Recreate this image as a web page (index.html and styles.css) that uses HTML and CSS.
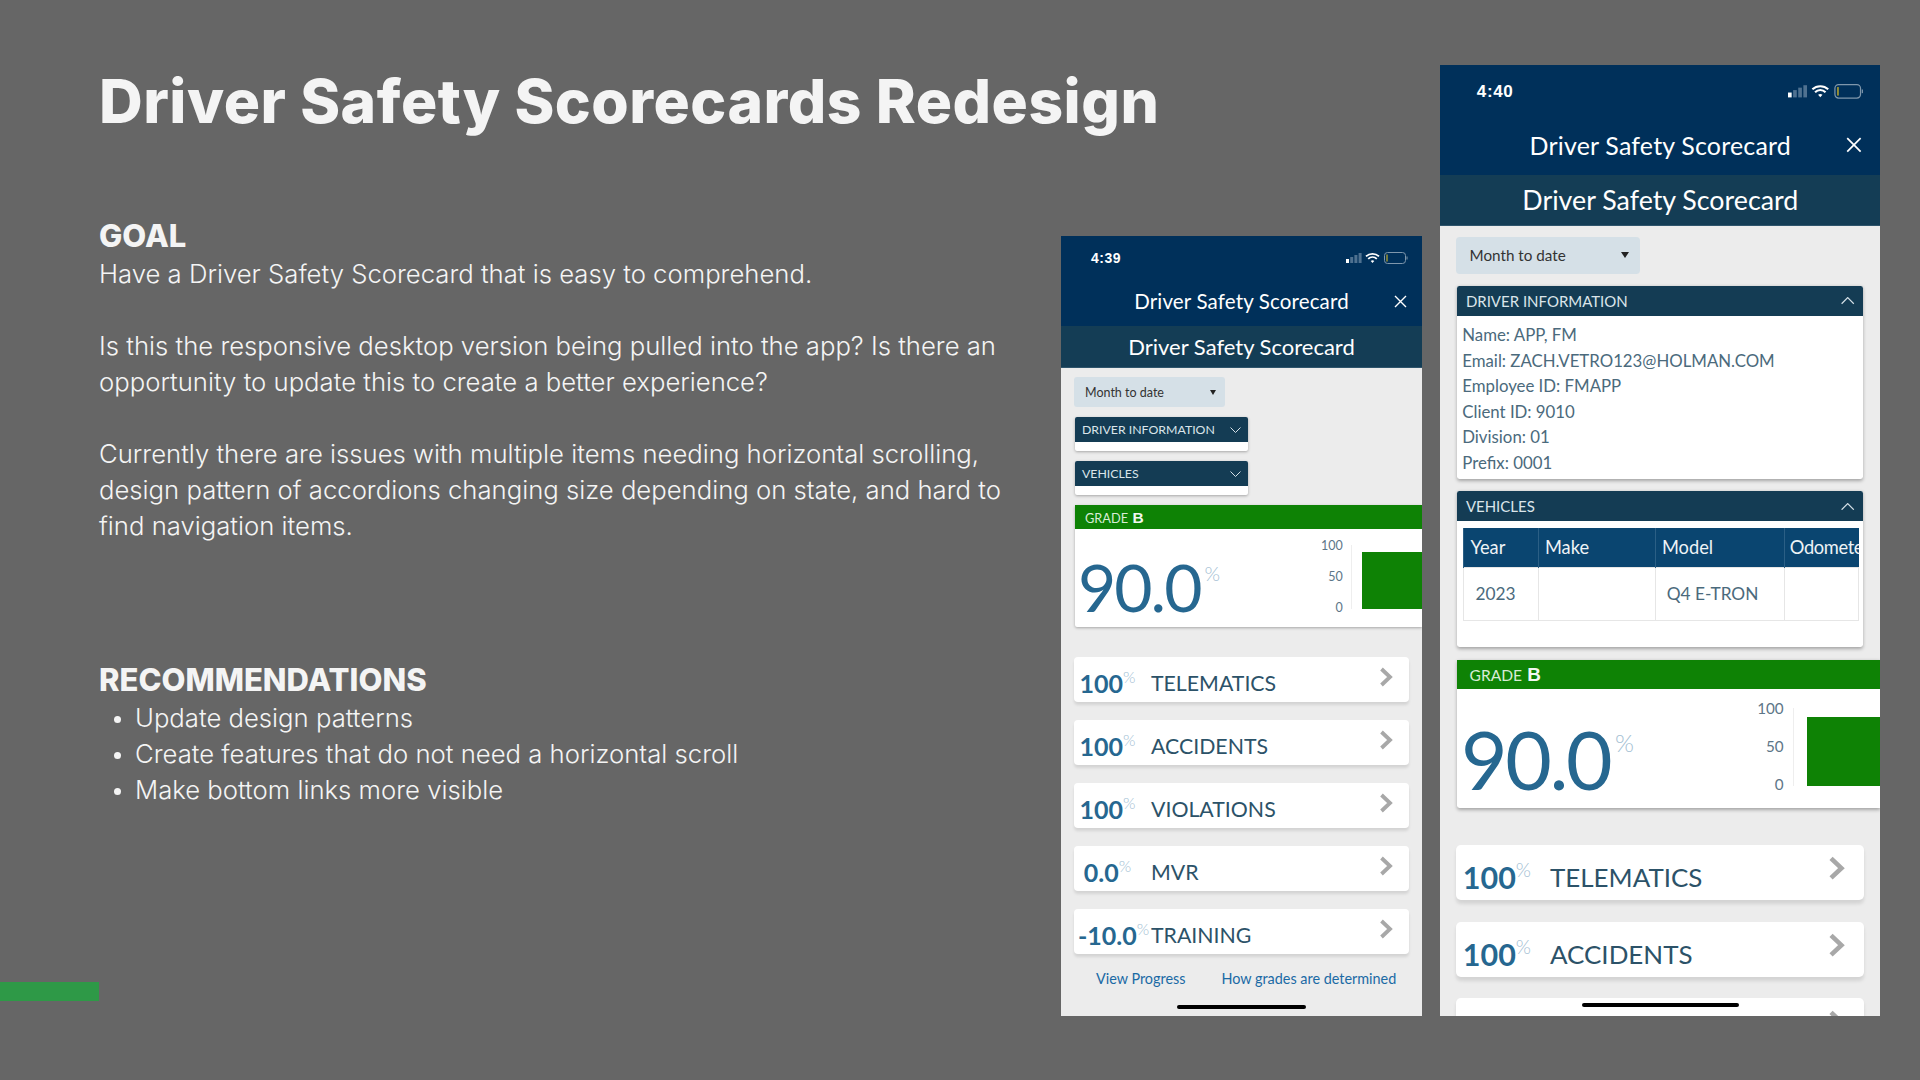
FILE: index.html
```html
<!DOCTYPE html>
<html lang="en">

<head>
  <meta charset="UTF-8">
  <meta name="viewport" content="width=device-width, initial-scale=1.0">
  <title>Driver Safety Scorecards Redesign</title>
  <link rel="stylesheet" href="styles.css">
</head>

<body>
  <div class="slide">
    <div class="notes">
      <h1>Driver Safety Scorecards Redesign</h1>

      <h2 class="goal-title">GOAL</h2>
      <p>Have a Driver Safety Scorecard that is easy to comprehend.</p>
      <p>Is this the responsive desktop version being pulled into the app? Is there an<br>opportunity to update this to create a better experience?</p>
      <p>Currently there are issues with multiple items needing horizontal scrolling,<br>design pattern of accordions changing size depending on state, and hard to<br>find navigation items.</p>

      <h2 class="rec-title">RECOMMENDATIONS</h2>
      <ul>
        <li>Update design patterns</li>
        <li>Create features that do not need a horizontal scroll</li>
        <li>Make bottom links more visible</li>
      </ul>
    </div>

    <!-- collapsed state -->
    <div class="phone">
      <div class="top-bar">
        <div class="status">
          <span class="time">4:39</span>
          <svg class="status-icons" width="62" height="12" viewBox="0 0 62 12">
            <rect x="0" y="7" width="3" height="4" fill="#fff"/>
            <rect x="4.200" y="5" width="3" height="6" fill="#4f7190"/>
            <rect x="8.400" y="3" width="3" height="8" fill="#4f7190"/>
            <rect x="12.600" y="1" width="3" height="10" fill="#4f7190"/>
            <path d="M20 4.400a9.500 9.500 0 0 1 13 0M22.200 6.800a6 6 0 0 1 8.600 0" fill="none" stroke="#fff" stroke-width="1.700"/>
            <path d="M24.700 8.900a2.800 2.800 0 0 1 3.600 0L26.500 10.900z" fill="#fff"/>
            <rect x="38.500" y=".5" width="21" height="11" rx="3" fill="none" stroke="#7f97ac" stroke-width="1"/>
            <rect x="60.500" y="4.500" width="1" height="3" fill="#7f97ac"/>
            <rect x="40.500" y="2.500" width="1" height="7" fill="#e8c320"/>
          </svg>
        </div>
        <div class="app-title">
          <span>Driver Safety Scorecard</span>
          <svg class="close" width="13" height="13" viewBox="0 0 13 13"><path d="M1 1l11 11M12 1L1 12" stroke="#fff" stroke-width="1.400"/></svg>
        </div>
      </div>
      <div class="sub-title">Driver Safety Scorecard</div>

      <div class="range">Month to date<i class="caret"></i></div>

      <div class="accordion narrow">
        <div class="accordion-head">DRIVER INFORMATION
          <svg width="11" height="6" viewBox="0 0 11 6"><path d="M.5.5l5 5 5-5" fill="none" stroke="#d5e0e7"/></svg>
        </div>
        <div class="accordion-body empty"></div>
      </div>
      <div class="accordion narrow">
        <div class="accordion-head">VEHICLES
          <svg width="11" height="6" viewBox="0 0 11 6"><path d="M.5.5l5 5 5-5" fill="none" stroke="#d5e0e7"/></svg>
        </div>
        <div class="accordion-body empty"></div>
      </div>

      <div class="grade">
        <div class="grade-head">GRADE <b>B</b></div>
        <div class="grade-body">
          <div class="score">90.0<sup>%</sup></div>
          <div class="chart">
            <div class="axis-labels"><span>100</span><span>50</span><span>0</span></div>
            <div class="axis"></div>
            <div class="bar"></div>
          </div>
        </div>
      </div>

      <div class="rows">
        <div class="row"><div class="num">100<sup>%</sup></div><span class="label">TELEMATICS</span><svg class="chev" width="14" height="20" viewBox="0 0 14 20"><path d="M2.500 2l8.500 8-8.500 8" fill="none" stroke="#a8a8a8" stroke-width="3.800"/></svg></div>
        <div class="row"><div class="num">100<sup>%</sup></div><span class="label">ACCIDENTS</span><svg class="chev" width="14" height="20" viewBox="0 0 14 20"><path d="M2.500 2l8.500 8-8.500 8" fill="none" stroke="#a8a8a8" stroke-width="3.800"/></svg></div>
        <div class="row"><div class="num">100<sup>%</sup></div><span class="label">VIOLATIONS</span><svg class="chev" width="14" height="20" viewBox="0 0 14 20"><path d="M2.500 2l8.500 8-8.500 8" fill="none" stroke="#a8a8a8" stroke-width="3.800"/></svg></div>
        <div class="row"><div class="num">0.0<sup>%</sup></div><span class="label">MVR</span><svg class="chev" width="14" height="20" viewBox="0 0 14 20"><path d="M2.500 2l8.500 8-8.500 8" fill="none" stroke="#a8a8a8" stroke-width="3.800"/></svg></div>
        <div class="row"><div class="num">-10.0<sup>%</sup></div><span class="label">TRAINING</span><svg class="chev" width="14" height="20" viewBox="0 0 14 20"><path d="M2.500 2l8.500 8-8.500 8" fill="none" stroke="#a8a8a8" stroke-width="3.800"/></svg></div>
      </div>

      <div class="links">
        <a>View Progress</a>
        <a>How grades are determined</a>
      </div>
      <div class="home-bar"></div>
    </div>

    <!-- expanded state -->
    <div class="phone phone-large">
      <div class="top-bar">
        <div class="status">
          <span class="time">4:40</span>
          <svg class="status-icons" width="62" height="12" viewBox="0 0 62 12">
            <rect x="0" y="7" width="3" height="4" fill="#fff"/>
            <rect x="4.200" y="5" width="3" height="6" fill="#4f7190"/>
            <rect x="8.400" y="3" width="3" height="8" fill="#4f7190"/>
            <rect x="12.600" y="1" width="3" height="10" fill="#4f7190"/>
            <path d="M20 4.400a9.500 9.500 0 0 1 13 0M22.200 6.800a6 6 0 0 1 8.600 0" fill="none" stroke="#fff" stroke-width="1.700"/>
            <path d="M24.700 8.900a2.800 2.800 0 0 1 3.600 0L26.500 10.900z" fill="#fff"/>
            <rect x="38.500" y=".5" width="21" height="11" rx="3" fill="none" stroke="#7f97ac" stroke-width="1"/>
            <rect x="60.500" y="4.500" width="1" height="3" fill="#7f97ac"/>
            <rect x="40.500" y="2.500" width="1" height="7" fill="#e8c320"/>
          </svg>
        </div>
        <div class="app-title">
          <span>Driver Safety Scorecard</span>
          <svg class="close" width="13" height="13" viewBox="0 0 13 13"><path d="M1 1l11 11M12 1L1 12" stroke="#fff" stroke-width="1.400"/></svg>
        </div>
      </div>
      <div class="sub-title">Driver Safety Scorecard</div>

      <div class="range">Month to date<i class="caret"></i></div>

      <div class="accordion">
        <div class="accordion-head">DRIVER INFORMATION
          <svg width="11" height="6" viewBox="0 0 11 6"><path d="M.5 5.500l5-5 5 5" fill="none" stroke="#d5e0e7"/></svg>
        </div>
        <div class="accordion-body info">
          <div>Name: APP, FM</div>
          <div>Email: ZACH.VETRO123@HOLMAN.COM</div>
          <div>Employee ID: FMAPP</div>
          <div>Client ID: 9010</div>
          <div>Division: 01</div>
          <div>Prefix: 0001</div>
        </div>
      </div>
      <div class="accordion">
        <div class="accordion-head">VEHICLES
          <svg width="11" height="6" viewBox="0 0 11 6"><path d="M.5 5.500l5-5 5 5" fill="none" stroke="#d5e0e7"/></svg>
        </div>
        <div class="accordion-body vehicles">
          <table>
            <tr><th>Year</th><th>Make</th><th>Model</th><th>Odometer</th></tr>
            <tr><td>2023</td><td></td><td>Q4 E-TRON</td><td></td></tr>
          </table>
        </div>
      </div>

      <div class="grade">
        <div class="grade-head">GRADE <b>B</b></div>
        <div class="grade-body">
          <div class="score">90.0<sup>%</sup></div>
          <div class="chart">
            <div class="axis-labels"><span>100</span><span>50</span><span>0</span></div>
            <div class="axis"></div>
            <div class="bar"></div>
          </div>
        </div>
      </div>

      <div class="rows">
        <div class="row"><div class="num">100<sup>%</sup></div><span class="label">TELEMATICS</span><svg class="chev" width="14" height="20" viewBox="0 0 14 20"><path d="M2.500 2l8.500 8-8.500 8" fill="none" stroke="#a8a8a8" stroke-width="3.800"/></svg></div>
        <div class="row"><div class="num">100<sup>%</sup></div><span class="label">ACCIDENTS</span><svg class="chev" width="14" height="20" viewBox="0 0 14 20"><path d="M2.500 2l8.500 8-8.500 8" fill="none" stroke="#a8a8a8" stroke-width="3.800"/></svg></div>
        <div class="row"><div class="num">100<sup>%</sup></div><span class="label">VIOLATIONS</span><svg class="chev" width="14" height="20" viewBox="0 0 14 20"><path d="M2.500 2l8.500 8-8.500 8" fill="none" stroke="#a8a8a8" stroke-width="3.800"/></svg></div>
      </div>
      <div class="home-bar"></div>
    </div>

    <div class="accent"></div>
  </div>
</body>

</html>
```
FILE: styles.css
```css
body {
  font-family: Inter, "Liberation Sans", sans-serif;
  margin: 0;
  padding: 0;
  background-color: #666;
}

.slide {
  position: relative;
  width: 1920px;
  height: 1080px;
  box-sizing: border-box;
  padding: 0 40px 64px 99px;
  display: flex;
  align-items: flex-end;
  overflow: hidden;
}

.accent {
  position: absolute;
  left: 0;
  top: 982px;
  width: 99px;
  height: 19px;
  background-color: #2e9947;
}

/* left column */
.notes {
  align-self: flex-start;
  width: 962px;
  flex-shrink: 0;
  color: #f4f4f4;
}

h1 {
  margin: 65px 0 0;
  font-size: 60.5px;
  line-height: 72px;
  font-weight: 800;
  letter-spacing: 0.5px;
  white-space: nowrap;
}

h2 {
  margin: 0;
  font-size: 31px;
  line-height: 38px;
  font-weight: 800;
}

.goal-title {
  margin-top: 80px;
}

.rec-title {
  margin-top: 117px;
}

.notes p {
  margin: 0 0 36px;
  padding-top: 1px;
  font-size: 25.7px;
  line-height: 36px;
  font-weight: 300;
  white-space: nowrap;
}

.notes p + p {
  margin-top: -1px;
}

ul {
  margin: 0;
  padding: 1px 0 0 36px;
  font-size: 25.7px;
  line-height: 36px;
  font-weight: 300;
}

li::marker {
  font-size: 22px;
}

/* phones */
.phone {
  position: relative;
  width: 361px;
  height: 780px;
  flex-shrink: 0;
  overflow: hidden;
  background-color: #ececec;
  font-family: Lato, "Noto Sans", sans-serif;
  color: #2c5268;
}

.phone-large {
  zoom: 1.2188;
  margin-left: 15px;
}

.top-bar {
  background-color: #00305a;
  height: 90px;
  color: white;
}

.status {
  height: 43px;
  padding: 0 14px 0 30px;
  display: flex;
  align-items: center;
  justify-content: space-between;
}

.time {
  font-family: "Liberation Sans", sans-serif;
  font-size: 14px;
  font-weight: 700;
  letter-spacing: 0.5px;
}

.app-title {
  position: relative;
  height: 44px;
  display: flex;
  align-items: center;
  justify-content: center;
  font-size: 20.5px;
  letter-spacing: 0.15px;
}

.close {
  position: absolute;
  right: 15px;
  top: 16px;
}

.sub-title {
  background-color: #143d55;
  height: 41px;
  line-height: 42px;
  border-bottom: 1px solid #2f556c;
  text-align: center;
  color: white;
  font-size: 22px;
}

.range {
  display: flex;
  align-items: center;
  justify-content: space-between;
  width: 151px;
  height: 30px;
  box-sizing: border-box;
  margin: 9px 0 0 13px;
  padding: 0 9px 0 11px;
  background-color: #d5e0e7;
  border-radius: 3px;
  font-size: 12.5px;
  color: #333;
}

.caret {
  border-left: 3.5px solid transparent;
  border-right: 3.5px solid transparent;
  border-top: 5px solid #222;
}

.accordion {
  width: 333px;
  margin: 10px 0 0 14px;
  background-color: white;
  border-radius: 2px;
  box-shadow: 0 1px 3px rgba(0, 0, 0, 0.3);
}

.accordion.narrow {
  width: 173px;
}

.accordion-head {
  display: flex;
  align-items: center;
  justify-content: space-between;
  height: 25px;
  padding: 0 7px;
  background-color: #143c54;
  border-radius: 2px 2px 0 0;
  color: #dbe5ea;
  font-size: 12.3px;
}

.accordion-body.empty {
  height: 9px;
}

.info {
  padding: 5px 5px 3px 4px;
  font-size: 13.8px;
  line-height: 20.9px;
  color: #4b6a7c;
}

.vehicles {
  padding: 5px 4px 22px 5px;
}

table {
  width: 324px;
  table-layout: fixed;
  border-collapse: collapse;
}

th {
  width: 61px;
  height: 33px;
  padding: 0 0 0 5px;
  box-sizing: border-box;
  background-color: #0a4570;
  border-left: 1px solid #2b5f85;
  text-align: left;
  font-weight: 400;
  font-size: 15px;
  color: #eef3f6;
  white-space: nowrap;
  overflow: hidden;
}

th:nth-child(2) {
  width: 96px;
}

th:nth-child(3) {
  width: 106px;
}

th:last-child {
  padding-left: 4px;
  letter-spacing: -0.3px;
}

td {
  height: 43px;
  padding: 0 0 0 9px;
  box-sizing: border-box;
  border: 1px solid #e6e6e6;
  font-size: 14.2px;
  color: #4b6a7c;
}

.grade {
  width: 347px;
  margin: 10px 0 0 14px;
  background-color: white;
  box-shadow: 0 1px 3px rgba(0, 0, 0, 0.3);
  border-radius: 2px 0 0 2px;
}

.grade-head {
  height: 24px;
  line-height: 25px;
  padding-left: 10px;
  background-color: #0e8205;
  color: #d8ecd6;
  font-size: 12.8px;
}

.grade-head b {
  margin-left: 1px;
  font-size: 15.5px;
  font-family: "Liberation Sans", sans-serif;
  color: #f2f8f1;
}

.grade-body {
  height: 98px;
  display: flex;
  justify-content: space-between;
}

.score {
  margin: 23px 0 0 3px;
  font-size: 66px;
  line-height: 70px;
  font-weight: 400;
  letter-spacing: -2px;
  color: #266790;
  white-space: nowrap;
}

.score sup {
  margin-left: 4px;
  font-size: 20px;
  font-weight: 300;
  letter-spacing: 0;
  line-height: 0;
  vertical-align: 31px;
  color: #a3c0d3;
}

.chart {
  display: flex;
  align-items: flex-start;
  margin-top: 10px;
  width: 99px;
}

.axis-labels {
  width: 23px;
  margin-left: -2px;
  height: 75px;
  display: flex;
  flex-direction: column;
  align-items: flex-end;
  justify-content: space-between;
  font-size: 12.5px;
  line-height: 13px;
  color: #5d7688;
}

.axis {
  width: 1px;
  height: 64px;
  margin: 6px 0 0 8px;
  background-color: #eee;
}

.bar {
  width: 79px;
  height: 57px;
  margin: 13px 0 0 10px;
  background-color: #0e8205;
}

.rows {
  margin: 30px 0 0 13px;
  width: 335px;
  display: flex;
  flex-direction: column;
  gap: 18px;
}

.row {
  display: flex;
  align-items: center;
  height: 45px;
  background-color: white;
  border-radius: 4px;
  box-shadow: 0 3px 3px rgba(0, 0, 0, 0.1);
  padding-top: 7.5px;
  box-sizing: border-box;
  flex-shrink: 0;
}

.num {
  width: 59px;
  margin-left: 4px;
  flex-shrink: 0;
  text-align: center;
  font-size: 25px;
  font-weight: 700;
  color: #266790;
  white-space: nowrap;
}

.num sup {
  font-size: 16px;
  font-weight: 300;
  line-height: 0;
  vertical-align: 10px;
  color: #a3c0d3;
}

.label {
  margin-left: 14px;
  font-size: 21.3px;
}

.chev {
  margin: 2px 16px 0 auto;
  align-self: flex-start;
}

.links {
  display: flex;
  margin: 16px 0 0 35px;
  gap: 36px;
  font-size: 14.4px;
  color: #1b6aa5;
}

.home-bar {
  position: absolute;
  left: 116px;
  bottom: 7px;
  width: 129px;
  height: 4px;
  border-radius: 2px;
  background-color: #000;
}
```
